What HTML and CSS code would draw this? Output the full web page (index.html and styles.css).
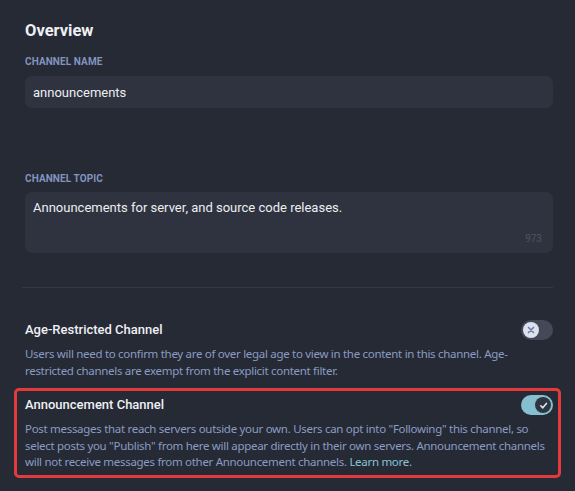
FILE: index.html
```html
<!DOCTYPE html>
<html>
<head>
<meta charset="utf-8">
<link rel="stylesheet" href="styles.css">
</head>
<body>
<main class="page">
  <h1 class="title">Overview</h1>

  <section class="field field-name">
    <div class="label">CHANNEL NAME</div>
    <div class="input">announcements</div>
  </section>

  <section class="field field-topic">
    <div class="label">CHANNEL TOPIC</div>
    <div class="textarea">
      <div class="textarea-text">Announcements for server, and source code releases.</div>
      <div class="counter">973</div>
    </div>
  </section>

  <hr class="divider">

  <section class="setting">
    <div class="setting-head">
      <div class="setting-title">Age-Restricted Channel</div>
      <div class="toggle toggle-off">
        <span class="knob">
          <svg viewBox="0 0 12 12" width="10" height="10"><path d="M3 3 L9 9 M9 3 L3 9" stroke="#6d7fa3" stroke-width="2" stroke-linecap="round" fill="none"/></svg>
        </span>
      </div>
    </div>
    <p class="setting-desc">Users will need to confirm they are of over legal age to view in the content in this channel. Age-restricted channels are exempt from the explicit content filter.</p>
  </section>

  <section class="setting setting-highlight">
    <div class="setting-head">
      <div class="setting-title">Announcement Channel</div>
      <div class="toggle toggle-on">
        <span class="knob">
          <svg viewBox="0 0 12 12" width="11" height="11"><path d="M3 6.3 L5.2 8.5 L9.2 3.8" stroke="#d5e6ee" stroke-width="1.8" stroke-linecap="round" stroke-linejoin="round" fill="none"/></svg>
        </span>
      </div>
    </div>
    <p class="setting-desc">Post messages that reach servers outside your own. Users can opt into "Following" this channel, so select posts you "Publish" from here will appear directly in their own servers. Announcement channels will not receive messages from other Announcement channels. <a class="link" href="#">Learn more.</a></p>
  </section>
</main>
</body>
</html>
```

FILE: styles.css
```css
* { box-sizing: border-box; }

html, body {
  margin: 0;
  padding: 0;
  background: #262a35;
  height: 100%;
}

body {
  font-family: "Noto Sans", "Open Sans", sans-serif;
  color: #f0f2f5;
}

.page {
  padding: 20px 22px 0 25px;
  width: 575px;
}

.title {
  margin: 0;
  font-family: "Roboto", "Inter", sans-serif;
  font-size: 16.5px;
  font-weight: 700;
  line-height: 22px;
  color: #eef0f4;
}

.label {
  font-family: "Roboto", "Inter", sans-serif;
  font-size: 10px;
  font-weight: 700;
  line-height: 12px;
  color: #8194be;
  letter-spacing: 0.1px;
}

.field-name { margin-top: 14px; }
.field-topic { margin-top: 65px; }

.input {
  margin-top: 8px;
  height: 32px;
  border-radius: 7px;
  background: #2f333f;
  padding: 0 8px;
  display: flex;
  align-items: center;
  font-family: "Roboto", "Inter", sans-serif;
  font-size: 13px;
  color: #eceef2;
}

.textarea {
  margin-top: 7px;
  height: 61px;
  border-radius: 7px;
  background: #2f333f;
  padding: 7px 8px;
  display: flex;
  flex-direction: column;
  justify-content: space-between;
}

.textarea-text {
  font-family: "Roboto", "Inter", sans-serif;
  font-size: 13px;
  line-height: 18px;
  color: #eceef2;
}

.counter {
  align-self: flex-end;
  font-family: "Roboto", "Inter", sans-serif;
  font-size: 10px;
  line-height: 12px;
  color: #4b5365;
  margin-right: 3px;
  margin-bottom: 1px;
}

.divider {
  border: 0;
  height: 1px;
  background: #343946;
  margin: 34px 0 0 -3px;
}

.setting { margin-top: 32px; }

.setting-head {
  display: flex;
  justify-content: space-between;
  align-items: center;
}

.setting-title {
  font-family: "Roboto", "Inter", sans-serif;
  font-size: 13px;
  font-weight: 500;
  line-height: 18px;
  color: #eef0f4;
}

.setting-desc {
  margin: 6px 0 0;
  font-size: 11.5px;
  line-height: 16.5px;
  color: #8a9cc2;
  letter-spacing: -0.3px;
}

.link {
  color: #86c3d6;
  text-decoration: none;
}

.toggle {
  width: 32px;
  height: 20px;
  border-radius: 10px;
  position: relative;
  flex: none;
}

.toggle-off { background: #434959; }
.toggle-on { background: #86bfd0; }

.knob {
  position: absolute;
  top: 2px;
  width: 16px;
  height: 16px;
  border-radius: 50%;
  display: flex;
  align-items: center;
  justify-content: center;
}

.toggle-off .knob { left: 2px; background: #dde3ee; }
.toggle-on .knob { right: 2px; background: #2e3440; }

.setting-highlight {
  margin: 9px -8px 0 -11px;
  padding: 4px 8px 4px 11px;
  border: 3px solid #e53a3d;
  border-radius: 5px;
}

.setting-highlight .setting-head { margin-left: -3px; margin-right: -3px; }
.setting-highlight .setting-desc { margin-left: -3px; margin-right: -3px; }
```
